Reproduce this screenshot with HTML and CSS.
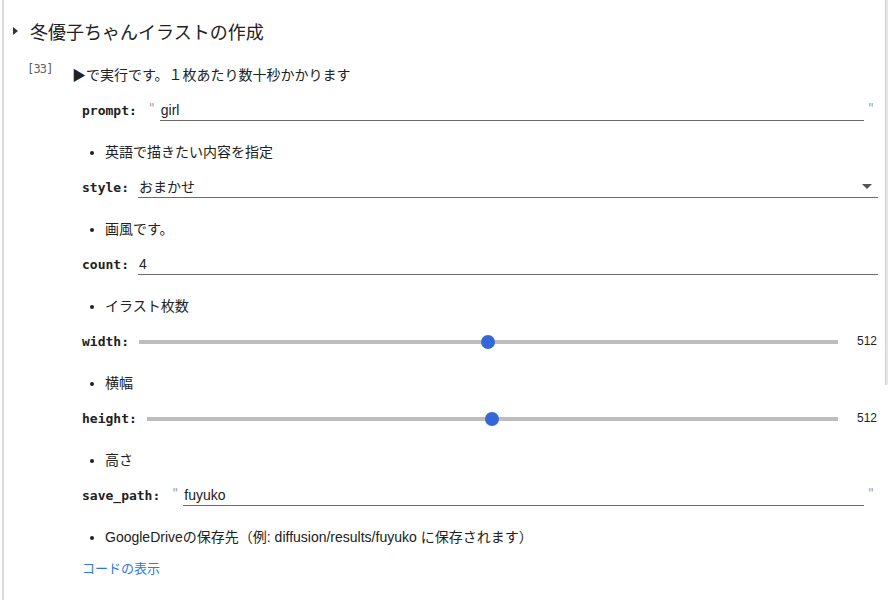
FILE: index.html
```html
<!DOCTYPE html>
<html lang="ja">
<head>
<meta charset="utf-8">
<title>冬優子ちゃんイラストの作成</title>
<link rel="stylesheet" href="styles.css">
</head>
<body>
<div class="frame">
  <div class="scrollbar"></div>
  <div class="section-head">
    <span class="caret"></span>
    <span class="section-title">冬優子ちゃんイラストの作成</span>
  </div>
  <div class="cell">
    <div class="exec">[33]</div>
    <div class="cell-body">
      <div class="intro">▶で実行です。１枚あたり数十秒かかります</div>
      <div class="form">
        <div class="row">
          <span class="label">prompt:</span>
          <span class="quote">"</span>
          <span class="field">girl</span>
          <span class="quote quote-end">"</span>
        </div>
        <ul class="desc"><li>英語で描きたい内容を指定</li></ul>

        <div class="row">
          <span class="label">style:</span>
          <span class="field select">おまかせ<span class="arrow"></span></span>
        </div>
        <ul class="desc"><li>画風です。</li></ul>

        <div class="row">
          <span class="label">count:</span>
          <span class="field">4</span>
        </div>
        <ul class="desc"><li>イラスト枚数</li></ul>

        <div class="row">
          <span class="label">width:</span>
          <span class="slider"><span class="thumb"></span></span>
          <span class="value">512</span>
        </div>
        <ul class="desc"><li>横幅</li></ul>

        <div class="row">
          <span class="label">height:</span>
          <span class="slider"><span class="thumb"></span></span>
          <span class="value">512</span>
        </div>
        <ul class="desc"><li>高さ</li></ul>

        <div class="row">
          <span class="label">save_path:</span>
          <span class="quote">"</span>
          <span class="field">fuyuko</span>
          <span class="quote quote-end">"</span>
        </div>
        <ul class="desc"><li>GoogleDriveの保存先（例: diffusion/results/fuyuko に保存されます）</li></ul>

        <a class="code-link" href="#">コードの表示</a>
      </div>
    </div>
  </div>
</div>
</body>
</html>
```
FILE: styles.css
```css
html, body {
  margin: 0;
  padding: 0;
  background: #ffffff;
}
body {
  width: 888px;
  height: 600px;
  overflow: hidden;
  font-family: "Liberation Sans", "Noto Sans CJK JP", sans-serif;
  color: #212121;
}
.frame {
  position: relative;
  margin-left: 2px;
  border-left: 2px solid #dcdcdc;
  height: 600px;
  box-sizing: border-box;
}
.scrollbar {
  position: absolute;
  top: 0;
  right: 0;
  width: 2px;
  height: 385px;
  background: #e6e6e6;
  border-left: 1px solid #d0d0d0;
}
.section-head {
  display: flex;
  align-items: center;
  height: 62px;
}
.caret {
  width: 0;
  height: 0;
  margin-left: 9px;
  border-left: 5px solid #333333;
  border-top: 4px solid transparent;
  border-bottom: 4px solid transparent;
}
.section-title {
  margin-left: 12px;
  font-family: "Noto Sans CJK JP", sans-serif;
  font-size: 18px;
  line-height: 24px;
  color: #212121;
}
.cell {
  display: flex;
  padding-right: 10px;
}
.exec {
  width: 68px;
  flex: none;
  box-sizing: border-box;
  padding-left: 23px;
  font-family: "DejaVu Sans Mono", monospace;
  font-size: 12px;
  letter-spacing: -0.8px;
  line-height: 14px;
  color: #616161;
}
.cell-body {
  flex: 1;
  min-width: 0;
}
.intro {
  margin-top: 2px;
  margin-bottom: 12px;
  font-family: "Noto Sans CJK JP", sans-serif;
  font-size: 14px;
  line-height: 20px;
}
.form {
  padding-left: 10px;
}
.row {
  display: flex;
  align-items: center;
  height: 28px;
  margin-bottom: 18px;
}
.label {
  flex: none;
  margin-right: 9px;
  font-family: "DejaVu Sans Mono", monospace;
  font-weight: bold;
  font-size: 13px;
  color: #212121;
  white-space: pre;
}
.quote {
  flex: none;
  width: 14px;
  height: 22px;
  box-sizing: border-box;
  padding-left: 3px;
  padding-top: 2px;
  font-family: "DejaVu Sans", sans-serif;
  font-size: 13px;
  line-height: 13px;
  color: #a0a0a0;
}
.quote-end {
  padding-left: 4px;
}
.field {
  flex: 1;
  display: flex;
  align-items: center;
  height: 22px;
  box-sizing: border-box;
  padding-left: 1px;
  border-bottom: 1px solid #6b6b6b;
  font-size: 14px;
  line-height: 20px;
  color: #212121;
}
.select .arrow {
  margin-left: auto;
  margin-right: 6px;
  width: 0;
  height: 0;
  border-top: 5px solid #555555;
  border-left: 5px solid transparent;
  border-right: 5px solid transparent;
}
.slider {
  flex: 1;
  position: relative;
  height: 4px;
  margin-left: 1px;
  margin-top: 2px;
  background: #bdbdbd;
}
.thumb {
  position: absolute;
  left: 50%;
  top: 50%;
  width: 14px;
  height: 14px;
  border-radius: 50%;
  background: #3367d6;
  transform: translate(-50%, -50%);
}
.value {
  flex: none;
  width: 21px;
  margin-left: 19px;
  font-size: 12px;
  color: #212121;
}
.desc {
  margin: 0 0 11px 0;
  padding-left: 23px;
  font-family: "Noto Sans CJK JP", sans-serif;
  font-size: 14px;
  line-height: 20px;
}
.desc li {
  font-family: "Liberation Sans", "Noto Sans CJK JP", sans-serif;
}
.code-link {
  display: block;
  margin-top: 2px;
  font-family: "Noto Sans CJK JP", sans-serif;
  font-size: 13px;
  line-height: 20px;
  color: #2a7ae2;
  text-decoration: none;
}
```
